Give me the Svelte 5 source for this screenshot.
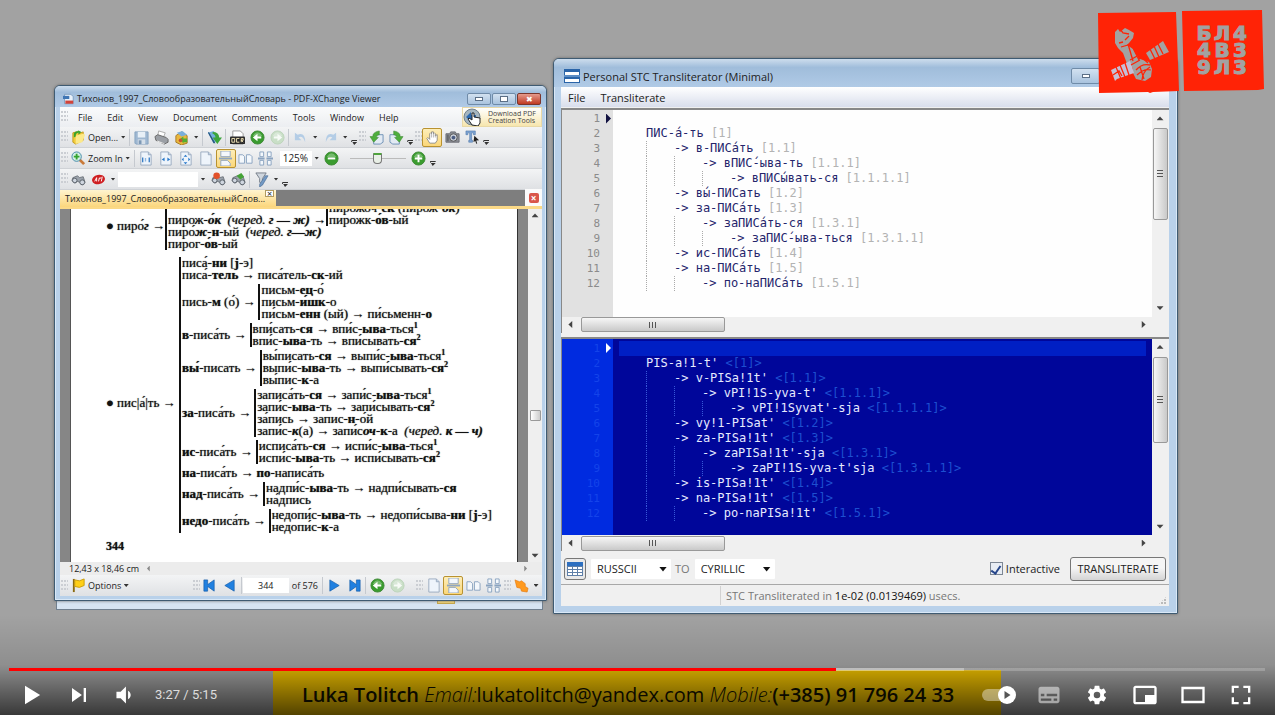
<script>
  const menus = ['File', 'Edit', 'View', 'Document', 'Comments', 'Tools', 'Window', 'Help'];

  const fileBar = ['grip', 'folder', 'Open...', 'drop', 'sep', 'save', 'print', 'mail', 'drop', 'sep', 'scan', 'sep', 'ocr', 'back', 'fwd', 'sep', 'undo', 'drop', 'redo', 'drop', 'more', 'grip', 'rotl', 'rotr', 'more', 'grip', 'hand!', 'camera', 'textsel', 'more'];
  const zoomBar = ['grip', 'zoom', 'Zoom In', 'drop', 'sep', 'actual', 'fitw', 'fitp', 'page', 'cont!', 'facing', 'quad'];

  const groups = [
    { head: '*в*-писа́ть', items: ['впи́сать-*ся* → впи́с-*ыва*-ться^1', 'впи́с-*ыва*-ть → впи́сывать-*ся*^2'] },
    { head: '*вы́*-писать', items: ['вы́писать-*ся* → выпи́с-*ыва*-ться^1', 'выпи́с-*ыва*-ть → выпи́сывать-*ся*^2', 'вы́пис-*к*-а'] },
    { head: '*за*-писа́ть', items: ['записа́ть-*ся* → запи́с-*ыва*-ться^1', 'запи́с-*ыва*-ть → запи́сывать-*ся*^2', 'за́пись → запис-*н*-о́й', 'запи́с-_к_(а) → запи́с_оч_-*к*-а  ~(черед.~ _к — ч)_'] },
    { head: '*ис*-писа́ть', items: ['исписа́ть-*ся* → испи́с-*ыва*-ться^1', 'испи́с-*ыва*-ть → испи́сывать-*ся*^2'] },
    { head: '*на*-писа́ть', plain: '*по*-написа́ть' },
    { head: '*над*-писа́ть', items: ['надпи́с-*ыва*-ть → надпи́сывать-*ся*', 'на́дпись'] },
    { head: '*недо*-писа́ть', items: ['недопи́с-*ыва*-ть → недопи́сыва-*ни* [*j*-э]', 'недопи́с-*к*-а'] }
  ];
  const noun = { head: 'пись-*м* (о́)', items: ['письм-*ец*-о́', 'письм-*и́шк*-о', 'пи́сьм-*енн* (ый) → пи́сьменн-*о*'] };

  const source = [
    [0, '', ''],
    [0, 'ПИС-а́-ть', '[1]'],
    [1, 'в-ПИСа́ть', '[1.1]'],
    [2, 'вПИС́-ыва-ть', '[1.1.1]'],
    [3, 'вПИС́ывать-ся', '[1.1.1.1]'],
    [1, 'вы́-ПИСать', '[1.2]'],
    [1, 'за-ПИСа́ть', '[1.3]'],
    [2, 'заПИСа́ть-ся', '[1.3.1]'],
    [3, 'заПИС́-ыва-ться', '[1.3.1.1]'],
    [1, 'ис-ПИСа́ть', '[1.4]'],
    [1, 'на-ПИСа́ть', '[1.5]'],
    [2, 'по-наПИСа́ть', '[1.5.1]']
  ];
  const result = [
    [0, '', ''],
    [0, "PIS-a!1-t'", '<[1]>'],
    [1, "v-PISa!1t'", '<[1.1]>'],
    [2, "vPI!1S-yva-t'", '<[1.1.1]>'],
    [3, "vPI!1Syvat'-sja", '<[1.1.1.1]>'],
    [1, "vy!1-PISat'", '<[1.2]>'],
    [1, "za-PISa!1t'", '<[1.3]>'],
    [2, "zaPISa!1t'-sja", '<[1.3.1]>'],
    [3, "zaPI!1S-yva-t'sja", '<[1.3.1.1]>'],
    [1, "is-PISa!1t'", '<[1.4]>'],
    [1, "na-PISa!1t'", '<[1.5]>'],
    [2, "po-naPISa!1t'", '<[1.5.1]>']
  ];

  // *bold*, _bold italic_, ~italic~ and ^superscript digit
  function runs(text) {
    const out = [];
    const kinds = { '*': 'b', '_': 'bi', '~': 'i' };
    const re = /([*_~])(.+?)\1|\^(\d)|[^*_~^]+/g;
    for (const m of text.matchAll(re)) {
      if (m[1]) out.push({ k: kinds[m[1]], t: m[2] });
      else if (m[3]) out.push({ k: 'sup', t: m[3] });
      else out.push({ k: '', t: m[0] });
    }
    return out;
  }

  let interactive = $state(true);
  let position = $state(207);
</script>

{#snippet icon(name)}
  <svg class="ico" viewBox="0 0 16 16" aria-hidden="true">
    {#if name === 'folder'}
      <path d="M2 3l4-1 2 2 5-2v9l-8 4-3-2z" fill="#f3cd3c" stroke="#c49a1c" /><path d="M5 6l8-2 2 1-3 8-7 2z" fill="#fce98a" /><path d="M3 8V4q1-3 5-3l-1-1 4 2-3 3V3q-3 0-3 4z" fill="#3ba32b" />
    {:else if name === 'save'}
      <path d="M1 2h14v13H2l-1-1z" fill="#9fb8d2" stroke="#86a3c0" /><path d="M4 2h8v6H4z" fill="#e8f0f7" /><path d="M4 10h8v5H4z" fill="#d5dfe9" /><path d="M5 11h3v4H5z" fill="#7d98b5" />
    {:else if name === 'print'}
      <path d="M5 1l7 2-2 5-6-2z" fill="#fff" stroke="#aaa" /><path d="M1 7l3-2 9 3 2 2v3l-4 2-9-4z" fill="#9b9fa5" stroke="#666" /><path d="M3 11l8 3v1l-7-2z" fill="#e8e8e8" />
    {:else if name === 'mail'}
      <path d="M2 6l6-4 6 4v8l-6 2-6-3z" fill="#e9b73d" stroke="#a87b22" /><path d="M3 3l6-2 5 4-6 2z" fill="#79aeda" /><path d="M7 9l3-2v2h4v4h-4v2z" fill="#54ad32" /><circle cx="7" cy="11" r="2" fill="#c25335" />
    {:else if name === 'scan'}
      <path d="M1 3l6-2 6 9-6 4z" fill="#74b1e0" /><path d="M1 3l6 11 2 0-7-12z" fill="#285781" /><path d="M6 2q7 0 7 6h3l-5 7-5-7h3q0-3-3-4z" fill="#3ca53c" />
    {:else if name === 'ocr'}
      <path d="M3 1h8l3 3v11H3z" fill="#fff" stroke="#999" /><rect y="7" width="16" height="8" rx="1" fill="#292929" /><path d="M2 9h3v4H2zM10 9H7v4h3M12 13V9h2v2h-2l2 2" fill="none" stroke="#f4e8ba" />
    {:else if ['back', 'fwd', 'fwdoff', 'minus', 'plus'].includes(name)}
      <circle cx="8" cy="8" r="7" fill={name.startsWith('fwd') ? '#c9dfc7' : '#3a9c2f'} stroke={name.startsWith('fwd') ? '#bdd3bb' : '#3f8a36'} />
      <path d="M3 6q5-7 10 0-5 3-10 0" fill="#fff" opacity=".3" />
      {#if name === 'back'}<path d="M12 7v2H8v3L3 8l5-4v3z" fill="#fff" />
      {:else if name === 'minus'}<path d="M4 7h8v2H4z" fill="#fff" />
      {:else if name === 'plus'}<path d="M4 7h3V4h2v3h3v2H9v3H7V9H4z" fill="#fff" />
      {:else}<path d="M4 7v2h4v3l5-4-5-4v3z" fill="#f7fbf7" />{/if}
    {:else if name === 'undo'}
      <path d="M2 3v8h7L6 8q4-3 7 5Q13 2 5 5z" fill="#b4cde6" />
    {:else if name === 'redo'}
      <path d="M14 3v8H7l3-3q-4-3-7 5Q3 2 11 5z" fill="#b4cde6" />
    {:else if name === 'rotl' || name === 'rotr'}
      <g transform={name === 'rotr' ? 'translate(16 0) scale(-1 1)' : ''}><path d="M5 5h10v8l-3 2H5z" fill="#e2eaf3" stroke="#6f91b5" /><path d="M1 7h3q0-5 7-6v4Q8 5 8 8h2l-5 5z" fill="#4fae3d" stroke="#2f7d26" stroke-width=".5" /></g>
    {:else if name === 'hand'}
      <path d="M5 14L2 9l1-1 2 2V4l1-1 1 1V2h2v2l1-1 1 1v2l2-1v6l-2 3z" fill="#fff" stroke="#777" stroke-width=".8" /><path d="M7 4v4M9 4v4M11 5v3" stroke="#999" stroke-width=".7" />
    {:else if name === 'camera'}
      <path d="M1 4h4l1-2h5l1 2h3v9H1z" fill="#8b8e95" stroke="#6b6d74" /><circle cx="9" cy="8" r="4" fill="#c8cdd6" stroke="#555" /><circle cx="9" cy="8" r="2" fill="#4a5c82" /><path d="M2 5h2v7H2z" fill="#66686d" />
    {:else if name === 'textsel'}
      <path d="M1 1h10v4H9V3H7v8h1v2H4v-2h1V3H3v2H1z" fill="#7fa5d4" stroke="#4a73a8" stroke-width=".6" /><path d="M10 6l5 5-3 .3 1 3-1 .4-1-3-2 1z" fill="#222" />
    {:else if name === 'zoom'}
      <path d="M9 9l5 5" stroke="#c97a3a" stroke-width="3" /><circle cx="6" cy="6" r="5" fill="#d3efe4" stroke="#4287a8" /><path d="M3 5h2V3h2v2h2v2H7v2H5V7H3z" fill="#34a52e" />
    {:else if ['actual', 'fitw', 'fitp', 'page'].includes(name)}
      <path d="M3 1h8l3 3v11H3z" fill="#eef4fb" stroke="#9aabc0" /><path d="M11 1v3h3" fill="#c3d3e5" stroke="#9aabc0" />
      {#if name === 'actual'}<path d="M5 7v5M12 7v5M8 8v1M8 10v1" stroke="#347bc4" stroke-width="1.4" />
      {:else if name === 'fitw'}<path d="M4 9l3-2v4zM13 9l-3-2v4z" fill="#2878ca" />
      {:else if name === 'fitp'}<path d="M8 4l2 2H6zM8 14l2-2H6zM4 9l2-2v4zM13 9l-2-2v4z" fill="#2878ca" />{/if}
    {:else if name === 'cont'}
      <path d="M3 0h10v6H3zM3 10h7l3 3v3H3z" fill="#f4f7fb" stroke="#93a5bd" /><path d="M1 8h14" stroke="#8ea5c2" stroke-width="2" />
    {:else if name === 'facing'}
      <path d="M1 4h4l2 2v7H1zM9 4h4l2 2v7H9z" fill="#f4f8fc" stroke="#8aa3c0" />
    {:else if name === 'quad'}
      <path d="M2 1h4v5H2zM10 1h4v5h-4zM2 10h4v5H2zM10 10h4v5h-4z" fill="#f4f8fc" stroke="#8aa3c0" /><path d="M0 8h7M9 8h7" stroke="#8aa3c0" stroke-width="2" />
    {:else if name === 'find' || name === 'findr' || name === 'findg'}
      <path d="M2 6l5-2 2 2 4-1 2 6-3 3-3-3-2-1-3 2-3-3z" fill="#9ba2ab" stroke="#5c636b" stroke-width=".8" /><circle cx="4" cy="9" r="2.4" fill="#cfd6df" stroke="#5c636b" /><circle cx="12" cy="11" r="2.6" fill="#cfd6df" stroke="#5c636b" />
      {#if name === 'findr'}<circle cx="6" cy="4" r="3.5" fill="#e2512a" />{:else if name === 'findg'}<path d="M6 4l5-3 3 4-4 3z" fill="#44a336" />{/if}
    {:else if name === 'badge'}
      <ellipse cx="8" cy="8" rx="7" ry="5" fill="#cf1f22" transform="rotate(-12 8 8)" /><path d="M4 10l2-4v4M9 6L8 10M12 5l-1 5M9 7l2-1" stroke="#fff" fill="none" />
    {:else if name === 'funnel'}
      <path d="M2 1h11L9 7v6l-3-2V7z" fill="#cfd6de" stroke="#747d87" /><path d="M15 4L9 14l-3 2v-3l6-9z" fill="#7299c4" stroke="#42648c" stroke-width=".6" />
    {:else if name === 'flag'}
      <path d="M3 1v14" stroke="#8a6a10" stroke-width="2" /><path d="M4 2l5 1 5-2v7l-5 2-5-1z" fill="#ffcf16" stroke="#c99c0a" />
    {:else if name === 'first'}
      <path d="M2 2h4v5l7-5v12L6 9v5H2z" fill="#2080e0" stroke="#145ba8" stroke-width=".7" />
    {:else if name === 'last'}
      <path d="M14 2h-4v5L3 2v12l7-5v5h4z" fill="#2080e0" stroke="#145ba8" stroke-width=".7" />
    {:else if name === 'prev'}
      <path d="M13 2v12L3 8z" fill="#2080e0" stroke="#145ba8" stroke-width=".7" />
    {:else if name === 'next'}
      <path d="M3 2v12l10-6z" fill="#2080e0" stroke="#145ba8" stroke-width=".7" />
    {:else if name === 'launch'}
      <path d="M1 2l5 2 2-1 4 3 0 3 3 2-1 4-6-1-1-3-4-1z" fill="#ff9a1f" stroke="#e07307" stroke-width=".6" />
    {/if}
  </svg>
{/snippet}

{#snippet tool(item)}
  {#if item === 'grip'}<span class="grip"></span>
  {:else if item === 'sep'}<span class="sep"></span>
  {:else if item === 'drop'}<button class="drop" aria-label="More choices"><i></i></button>
  {:else if item === 'more'}<button class="drop more" aria-label="Toolbar options"><i></i></button>
  {:else if /^[A-Z]/.test(item)}<button class="label">{item}</button>
  {:else}<button class="tool" class:on={item.endsWith('!')} aria-label={item.replace('!', '')}>{@render icon(item.replace('!', ''))}</button>{/if}
{/snippet}

{#snippet rich(text)}{#each runs(text) as r}{#if r.k === 'sup'}<sup>{r.t}</sup>{:else}<span class={r.k}>{r.t}</span>{/if}{/each}{/snippet}

{#snippet branch(g)}
  <div class="branch">
    <span class="head">{@render rich(g.head)} →</span>
    {#if g.plain}<span>{@render rich(g.plain)}</span>
    {:else}<div class="bracket">{#each g.items as it}<div>{@render rich(it)}</div>{/each}</div>{/if}
  </div>
{/snippet}

{#snippet editor(lines, dark)}
  <div class="editor" class:dark>
    <div class="code">
      {#each lines as [level, word, tag], n}
        <div class="line">
          <span class="num">{n + 1}</span><span class="mark">{#if n === 0}<i></i>{/if}</span>
          <span class="src" class:current={n === 0}>
            {#each Array(level) as _}<span class="guide"></span>{/each}{#if word}<span>{level ? '-> ' : ''}{word} <em>{tag}</em></span>{/if}
          </span>
        </div>
      {/each}
    </div>
    <div class="vbar"><i class="up"></i><span class="thumb"></span><i class="down"></i></div>
    <div class="hbar"><i class="left"></i><span class="thumb"></span><i class="right"></i></div>
    <div class="corner"></div>
  </div>
{/snippet}

<main class="stage">
  <div class="shade-window"><span></span></div>

  <section class="window pdf" aria-label="PDF-XChange Viewer">
    <header class="title">
      <svg class="app" viewBox="0 0 14 14" aria-hidden="true"><path d="M2 1h8l3 3v9H2z" fill="#e9f1fa" stroke="#6f93b9" /><path d="M0 3h8v4H0z" fill="#3f76b4" /><path d="M3 9h10v4H3z" fill="#d2433a" /></svg>
      <h1>Тихонов_1997_СловообразовательныйСловарь - PDF-XChange Viewer</h1>
      <div class="winbtns">
        <button aria-label="Minimize"><i class="min"></i></button><button aria-label="Maximize"><i class="max"></i></button><button class="close" aria-label="Close">✖</button>
      </div>
    </header>
    <div class="body">
      <nav class="menubar">
        <span class="grip"></span>
        {#each menus as m}<button>{m}</button>{/each}
        <a class="promo" href="#tools">
          <svg viewBox="0 0 20 18" aria-hidden="true"><circle cx="9" cy="9" r="8" fill="#a5b5bf" stroke="#70808c" /><path d="M3 9l5-5v3h5v4H8v3z" fill="#2c6ab0" /><path d="M9 17l-4-6 1-1 3 2V5h2v4l6 1v5l-2 3z" fill="#fff" stroke="#222" /></svg>
          <span>Download PDF<br />Creation Tools</span>
        </a>
      </nav>
      <div class="bar">{#each fileBar as t}{@render tool(t)}{/each}</div>
      <div class="bar">
        {#each zoomBar as t}{@render tool(t)}{/each}
        <input class="pct" aria-label="Zoom level" value="125%" />
        {@render tool('drop')}{@render tool('minus')}
        <input class="zoomslide" type="range" aria-label="Zoom" value="50" />
        {@render tool('plus')}{@render tool('more')}
      </div>
      <div class="bar">
        {#each ['grip', 'find', 'badge', 'drop'] as t}{@render tool(t)}{/each}
        <input class="search" aria-label="Search" />
        {#each ['drop', 'findr', 'findg', 'sep', 'funnel', 'drop', 'more'] as t}{@render tool(t)}{/each}
      </div>
      <div class="tabs">
        <div class="tab"><span>Тихонов_1997_СловообразовательныйСлов...</span><button aria-label="Close tab">×</button></div>
        <button class="closedoc" aria-label="Close document"><b>×</b></button>
      </div>
      <div class="view">
        <article class="sheet">
          <div class="entry first">
            <span class="word">● пиро́<span class="bi">г</span> →</span>
            <div class="bracket">
              <div class="inner">
                <div>{@render rich('пирож-_о́к_  ~(черед.~ _г — ж)_ →')}</div>
                <div class="bracket"><div>{@render rich('пирожо́ч-*ек* (пирож-_о́к_)')}</div><div>{@render rich('пирожк-*о́в*-ый')}</div></div>
              </div>
              <div>{@render rich('пиро́_ж_-*н*-ый  ~(черед.~ _г—ж)_')}</div>
              <div>{@render rich('пирог-*о́в*-ый')}</div>
            </div>
          </div>
          <div class="entry second">
            <span class="word">● пис|а́|ть →</span>
            <div class="bracket stack">
              <div class="lines"><div>{@render rich('писа́-*ни* [*j*-э]')}</div><div>{@render rich('писа́-*тель* → писа́тель-*ск*-ий')}</div></div>
              {@render branch(noun)}
              {#each groups as g}{@render branch(g)}{/each}
            </div>
          </div>
          <div class="folio">344</div>
        </article>
        <div class="pagebar"><i class="up"></i><span></span><i class="down"></i></div>
      </div>
      <div class="size"><span>12,43 x 18,46 cm</span><i class="left"></i><i class="right"></i></div>
      <div class="bar foot">
        {#each ['grip', 'flag', 'Options', 'drop'] as t}{@render tool(t)}{/each}
        <span class="grow"></span>
        {#each ['grip', 'first', 'prev', 'sep'] as t}{@render tool(t)}{/each}
        <input class="pageno" aria-label="Page" value="344" />
        <span class="of">of 576</span>
        {#each ['sep', 'next', 'last', 'sep', 'back', 'fwdoff'] as t}{@render tool(t)}{/each}
        <span class="gap"></span>
        {#each ['grip', 'page', 'cont!', 'facing', 'quad', 'grip', 'launch', 'drop'] as t}{@render tool(t)}{/each}
      </div>
    </div>
  </section>

  <section class="window stc" aria-label="Personal STC Transliterator">
    <header class="title">
      <svg class="app" viewBox="0 0 16 16" aria-hidden="true"><path d="M0 1h16v14H0z" fill="#2a64a8" /><path d="M1 4h14v3H1zM1 11h14v3H1z" fill="#fff" /><path d="M0 8h16" stroke="#8db5df" /></svg>
      <h1>Personal STC Transliterator (Minimal)</h1>
      <div class="winbtns"><button aria-label="Minimize"><i class="min"></i></button></div>
    </header>
    <div class="body">
      <nav class="menubar"><button>File</button><button>Transliterate</button></nav>
      {@render editor(source, false)}
      {@render editor(result, true)}
      <div class="controls">
        <button class="grid" aria-label="Table"><svg viewBox="0 0 16 14" aria-hidden="true"><path d="M0 0h16v14H0z" fill="#5e7fa8" /><path d="M0 0h16v4H0z" fill="#2d6fc0" /><path d="M1 5h4v2H1zM6 5h4v2H6zM11 5h4v2h-4zM1 8h4v2H1zM6 8h4v2H6zM11 8h4v2h-4zM1 11h4v2H1zM6 11h4v2H6zM11 11h4v2h-4z" fill="#fff" /></svg></button>
        <span class="pick"><select aria-label="Source alphabet"><option>RUSSCII</option></select></span>
        <span class="to">TO</span>
        <span class="pick"><select aria-label="Target alphabet"><option>CYRILLIC</option></select></span>
        <label><input type="checkbox" bind:checked={interactive} />Interactive</label>
        <button class="go">TRANSLITERATE</button>
      </div>
      <footer><span class="cell"></span><span>STC Transliterated in <b>1e-02 (0.0139469)</b> usecs.</span><span class="sizer"></span></footer>
    </div>
  </section>

  <div class="logo">
    <svg viewBox="0 0 168 84" aria-hidden="true">
      <path d="M1 3l78-1 3 79-26 1-3 1-2-1-49 1z" fill="#ff2306" />
      <path d="M85 1l80-1 1 40 1 39-6 1-74 1z" fill="#ff2306" />
      <g fill="#a2a2a2">
        <path d="M18 22l3-3 2 3 5-4 4 2 5 3-1 5-4 5-2 2 6 4 6 10 2 5-7 3-5 2-3-8-3-8-5-5-3-5z" />
        <path d="M49 43l17-12 6 11-19 8z" />
        <path d="M35 53l8-4 9 3 3 7-1 8-6 4-9-2-3-6z" />
      </g>
      <path d="M14 60l19-9 4 12-17 6-2 2z" fill="#c6bfd6" />
      <path d="M23 19l3 4 6 1M22 33l4-1M24 37l7-2M32 26l-4 4M31 34l5 17M36 38l6 12M33 50l9-5 9 8M34 55l9-5M39 60q6-7 14-5M40 65q7-7 14-5M45 70q1-9 8-13M43 57l4 12M53 39l5 10M57 36l5 11M61 34l5 10M19 57l5 12M23 55l5 12M28 53l4 12M16 65l6-4 3 5" fill="none" stroke="#ff2306" stroke-width="1.3" />
    </svg>
    <div class="letters">{#each 'БЛ44В39Л3'.split('') as c}<span>{c}</span>{/each}</div>
  </div>

  <div class="banner"></div>
  <div class="fade"></div>
  <div class="contact"><b>Luka Tolitch</b> <i>Email:</i><span>lukatolitch@yandex.com</span> <i>Mobile:</i><b>(+385) 91 796 24 33</b></div>

  <div class="player">
    <input class="seek" type="range" aria-label="Seek" min="0" max="315" bind:value={position} style="--at: {(position / 315) * 100 + 0.1}%" />
    <div class="buttons">
      <button aria-label="Play"><svg viewBox="0 0 36 36"><path d="M12 26l13-8-13-8z" /></svg></button>
      <button aria-label="Next"><svg viewBox="0 0 36 36"><path d="M12 24l8.500-6L12 12zM22 12v12h2V12z" /></svg></button>
      <button class="vol" aria-label="Mute"><svg viewBox="0 0 36 36"><path d="M8 21h4l5 5V10l-5 5H8zM19 14v8c1.480-.68 2.500-2.230 2.500-4s-1.020-3.260-2.500-4z" /></svg></button>
      <span class="time">3:27 / 5:15</span>
      <button class="auto" aria-label="Autoplay"><svg viewBox="0 0 36 22"><rect x="1" y="5" width="30" height="12" rx="6" fill="#fff" opacity=".4" /><circle cx="26" cy="11" r="9" /><path d="M23.500 7v8l6-4z" fill="#555" /></svg></button>
      <button class="dim" aria-label="Subtitles"><svg viewBox="0 0 36 36"><path fill-rule="evenodd" d="M11 11c-1.100 0-2 .9-2 2v10c0 1.100.9 2 2 2h14c1.100 0 2-.9 2-2V13c0-1.100-.9-2-2-2zM11 17h3v2h-3zM20 23h-9v-2h9zM25 23h-3v-2h3zM25 19h-9v-2h9z" /></svg></button>
      <button aria-label="Settings"><svg viewBox="0 0 36 36"><path fill-rule="evenodd" d="m23.940 18.780c.03-.25.05-.51.05-.78s-.02-.52-.05-.78l1.680-1.320c.15-.12.19-.33.09-.51l-1.600-2.760c-.09-.17-.31-.24-.48-.17l-1.990.8c-.41-.32-.86-.58-1.350-.78l-.3-2.120c-.02-.19-.19-.33-.39-.33h-3.200c-.2 0-.36.14-.39.33l-.3 2.120c-.48.2-.93.47-1.350.78l-1.990-.8c-.18-.07-.39 0-.48.17l-1.600 2.760c-.1.17-.05.39.09.51l1.680 1.320c-.03.25-.05.52-.05.78s.02.52.05.78l-1.680 1.320c-.15.12-.19.33-.09.51l1.600 2.760c.09.17.31.24.48.17l1.990-.8c.41.32.86.58 1.350.78l.3 2.120c.02.19.19.33.39.33h3.200c.2 0 .36-.14.39-.33l.3-2.120c.48-.2.93-.47 1.350-.78l1.990.8c.18.07.39 0 .48-.17l1.600-2.760c.09-.17.05-.39-.09-.51zM18 20.800a2.800 2.800 0 1 1 0-5.600a2.800 2.800 0 1 1 0 5.600z" /></svg></button>
      <button aria-label="Miniplayer"><svg viewBox="0 0 36 36"><path fill-rule="evenodd" d="M26 18h-8v6h8zM28 24V12c0-1.100-.9-2-2-2H10c-1.100 0-2 .9-2 2v12c0 1.100.9 2 2 2h16c1.100 0 2-.9 2-2zM26 24H10V12h16z" /></svg></button>
      <button aria-label="Theater mode"><svg viewBox="0 0 36 36"><path fill-rule="evenodd" d="M28 11v14H8V11zM10 13h16v10H10z" /></svg></button>
      <button aria-label="Full screen"><svg viewBox="0 0 36 36"><path d="M10 16h2v-4h4v-2h-6zM20 10v2h4v4h2v-6zM24 24h-4v2h6v-6h-2zM12 20h-2v6h6v-2h-4z" /></svg></button>
    </div>
  </div>
</main>

<style>
  :global(body) { background: #a2a2a2; }
  .stage { position: relative; height: 100vh; min-height: 715px; overflow: hidden; background: #a2a2a2; font-family: "Open Sans", "Noto Sans", sans-serif; font-size: 9px; color: #222; }
  .stage * { box-sizing: border-box; }
  button, input, select { font: inherit; color: inherit; margin: 0; padding: 0; border: 0; background: none; outline: 0; }
  button { display: flex; align-items: center; justify-content: center; white-space: nowrap; }
  h1 { margin: 0; font: inherit; white-space: nowrap; }
  i.up, i.down, i.left, i.right { width: 7px; height: 7px; background: #444; flex: none; }
  i.up { clip-path: polygon(0 75%, 50% 20%, 100% 75%); }
  i.down { clip-path: polygon(0 25%, 50% 80%, 100% 25%); }
  i.left { clip-path: polygon(75% 0, 20% 50%, 75% 100%); }
  i.right { clip-path: polygon(25% 0, 80% 50%, 25% 100%); }

  .window { position: absolute; display: flex; flex-direction: column; border: 1px solid #3f5b72; border-radius: 6px 6px 1px 1px; background: #b9d1ea; box-shadow: inset 0 0 0 1px #d9e8f7, 0 0 3px #666; }
  .body { flex: 1; min-height: 0; display: flex; flex-direction: column; background: #f0f0f0; overflow: hidden; }
  .title { display: flex; align-items: center; border-radius: 5px 5px 0 0; background: linear-gradient(#cddded, #a0bddb 30%, #b0cae6); flex: none; }
  .title h1 { flex: 1; }
  .winbtns { display: flex; align-self: flex-start; }
  .winbtns button { width: 24px; height: 12px; margin-right: 1px; border: 1px solid #6f8ba8; border-radius: 2px; background: linear-gradient(#d2e1f0, #a9c3de); }
  .winbtns .close { background: linear-gradient(#e59a8c, #c03a22); border-color: #7a352b; color: #fff; font-size: 8px; line-height: 10px; }
  .min { width: 8px; height: 4px; border: 1px solid #5b6f86; background: #fff; }
  .max { width: 8px; height: 6px; border: 1px solid #5b6f86; background: #fff; }

  .shade-window { position: absolute; inset: 590px 732px 105px 56px; border: 1px solid #707f8e; background: #d6e4f2; display: flex; align-items: flex-end; justify-content: flex-end; padding: 0 87px 5px 0; }
  .shade-window span { width: 18px; height: 4px; background: #f5d778; border: 1px solid #c9a94c; }

  .pdf { inset: 85px 728px 114px 54px; padding: 0 4px 4px 5px; }
  .pdf .title { height: 21px; margin: 0 -4px 0 -5px; padding: 4px 4px 0 8px; }
  .pdf .title .app { width: 11px; height: 12px; margin-right: 3px; }
  .pdf .winbtns { margin-top: 3px; }
  .pdf .menubar { display: flex; align-items: stretch; height: 20px; background: linear-gradient(#fafbfc, #eceef1); }
  .pdf .menubar button { margin-left: 10px; margin-right: 5px; }
  .promo { margin-left: auto; width: 80px; display: flex; align-items: center; gap: 5px; color: #444; text-decoration: none; font-size: 7px; line-height: 7px; background: linear-gradient(#fff, #f7e6ae); border: 1px solid #e9d9a7; white-space: nowrap; }
  .promo svg { width: 20px; height: 18px; flex: none; }
  .bar { display: flex; align-items: center; height: 21px; flex: none; background: linear-gradient(#f3f4f5, #dfe1e4); border-bottom: 1px solid #cfd2d6; }
  .grip { width: 8px; height: 12px; flex: none; align-self: center; background: radial-gradient(circle at 1px 1px, #cbced3 1px, transparent 1px) 1px 0 / 3px 4px; }
  .sep { width: 1px; height: 17px; margin: 0 1px; background: #c5c9cf; flex: none; }
  .tool { width: 20px; height: 19px; flex: none; }
  .tool.on { border: 1px solid #b99230; border-radius: 2px; background: linear-gradient(#fdeeb9, #fbd779); }
  .ico { width: 15px; height: 15px; }
  .drop { width: 10px; height: 16px; flex: none; }
  .drop i { width: 5px; height: 3px; background: #333; clip-path: polygon(0 0, 100% 0, 50% 100%); }
  .drop.more { width: 8px; align-items: flex-end; }
  .drop.more i { width: 6px; height: 5px; clip-path: polygon(0 0, 100% 0, 100% 20%, 0 20%, 0 40%, 100% 40%, 50% 100%); }
  .pct { width: 32px; height: 15px; margin-left: 4px; background: #fff; padding-left: 3px; font-size: 10px; }
  .search { width: 80px; height: 15px; background: #fff; }
  .zoomslide { appearance: none; width: 56px; height: 14px; margin: 0 3px 0 8px; background: linear-gradient(#bbb, #bbb) center / 100% 1px no-repeat; }
  .zoomslide::-webkit-slider-thumb { appearance: none; width: 9px; height: 11px; border: 1px solid #777; border-top: 2px solid #4fa33c; border-radius: 1px 1px 4px 4px; background: #e8efe6; }
  .tabs { display: flex; align-items: flex-end; height: 19px; flex: none; background: #7e7e7e; border-bottom: 3px solid #fbd987; }
  .tab { display: flex; align-items: flex-start; justify-content: space-between; width: 216px; height: 17px; margin-bottom: -1px; padding-left: 5px; background: linear-gradient(#fff4cf, #fbd67c); }
  .tab span { line-height: 17px; white-space: nowrap; }
  .tab button { width: 9px; height: 7px; margin-right: 3px; border: 1px solid #b09a60; background: #fff; line-height: 5px; flex: none; }
  .closedoc { width: 17px; height: 17px; margin-left: auto; background: #fbfbfb; }
  .closedoc b { width: 10px; height: 10px; border-radius: 2px; background: #d9564a; color: #fff; font-size: 10px; line-height: 10px; }
  .view { flex: 1; min-height: 0; display: flex; padding-left: 10px; background: #868686; }
  .sheet { flex: 1; min-width: 0; display: flex; flex-direction: column; overflow: hidden; background: #fff; color: #111; padding: 0 0 0 35px; font: 13px/12px "Liberation Serif", serif; text-shadow: 0 0 1px #444; white-space: pre; border-right: 1px solid #333; border-left: 1px solid #555; margin-right: 10px; }
  .entry { display: flex; align-items: flex-start; }
  .entry .word { flex: none; }
  .first { margin-top: -7px; }
  .first .word { width: 59px; padding-top: 18px; }
  .second { margin-top: 7px; }
  .second .word { width: 73px; padding-top: 140px; }
  .bracket { display: flex; flex-direction: column; border-left: 2px solid #111; padding-left: 1px; }
  .inner { display: flex; align-items: flex-end; }
  .stack { gap: 3px; }
  .branch { display: flex; align-items: center; }
  .head { margin-right: 3px; }
  .b { font-weight: bold; }
  .i { font-style: italic; }
  .bi { font-weight: bold; font-style: italic; }
  sup { font-size: 8px; line-height: 1px; font-weight: bold; }
  .folio { margin-top: 7px; font-size: 12px; font-weight: bold; }
  .pagebar { width: 14px; flex: none; background: #efefef; display: flex; flex-direction: column; align-items: center; padding: 3px 0; }
  .pagebar span { width: 11px; height: 11px; margin: 191px 0 auto; border: 1px solid #999; background: linear-gradient(90deg, #fff, #ccc); border-radius: 1px; }
  .size { display: flex; align-items: center; height: 13px; flex: none; background: #ececec; padding-right: 14px; }
  .size span { width: 86px; padding-left: 9px; white-space: nowrap; }
  .size i.left, .size i.right { width: 5px; height: 6px; background: #888; }
  .size i.right { margin-left: auto; }
  .foot { border: 0; padding-right: 1px; }
  .grow { flex: 1; }
  .gap { width: 8px; }
  .pageno { width: 46px; height: 15px; background: #fff; text-align: center; }
  .of { padding: 0 3px; white-space: nowrap; }

  .stc { inset: 58px 97px 101px 553px; padding: 0 8px 7px 7px; font-size: 11px; }
  .stc .title { height: 28px; margin: 0 -8px 0 -7px; padding: 6px 8px 0 10px; }
  .stc .title .app { width: 16px; height: 16px; margin-right: 3px; }
  .stc .winbtns { margin: 3px 68px 0 0; }
  .stc .winbtns button { width: 29px; height: 16px; }
  .stc .menubar { display: flex; height: 20px; flex: none; padding-left: 7px; gap: 15px; background: linear-gradient(#fff, #d9deec); }
  .editor { flex: 1 1 224px; min-height: 0; display: grid; grid-template: 1fr 16px / 1fr 17px; border-top: 2px solid #888; border-left: 1px solid #888; margin: 1px 0 3px; }
  .editor.dark { flex-basis: 214px; margin-bottom: 2px; }
  .code { overflow: hidden; padding-top: 1px; background: linear-gradient(90deg, #e1e1e1 51px, #fefefe 51px); font: 12px/15px "DejaVu Sans Mono", monospace; color: #25256b; white-space: nowrap; }
  .line { display: flex; height: 15px; }
  .num { width: 38px; text-align: right; color: #8b8b8b; font-size: 11px; }
  .mark { width: 13px; display: flex; align-items: center; justify-content: flex-end; padding-right: 2px; }
  .mark i { width: 5px; height: 10px; background: #111140; clip-path: polygon(0 0, 100% 50%, 0 100%); }
  .src { flex: 1; display: flex; margin: 0 6px; padding-left: 27px; white-space: pre; }
  .guide { width: 28px; border-left: 1px dotted #aaa; }
  em { font-style: normal; color: #b3b3b3; }
  .dark .code { padding-top: 2px; background: linear-gradient(90deg, #002be0 51px, #00069a 51px); color: #e6eaff; }
  .dark .num { color: #1443ea; }
  .dark .mark i { background: #fff; }
  .dark .current { background: #001fc4; }
  .dark .guide { border-color: #3858d8; }
  .dark em { color: #1d4fd0; }
  .vbar, .hbar { display: flex; align-items: center; background: #f0f0f0; }
  .vbar { flex-direction: column; padding: 5px 2px 5px 1px; }
  .vbar .thumb { width: 15px; height: 92px; margin: 6px 0 auto; border: 1px solid #999; border-radius: 2px; background: repeating-linear-gradient(#555 0 1px, transparent 1px 3px) center / 6px 8px no-repeat, linear-gradient(90deg, #f6f6f6, #c9c9c9); }
  .dark .vbar .thumb { height: 86px; }
  .hbar { padding: 0 5px; }
  .hbar .thumb { width: 144px; height: 15px; margin: 0 auto 0 7px; border: 1px solid #999; border-radius: 2px; background: repeating-linear-gradient(90deg, #555 0 1px, transparent 1px 3px) center / 8px 6px no-repeat, linear-gradient(#f6f6f6, #c9c9c9); }
  .controls { display: flex; align-items: center; height: 32px; flex: none; padding: 0 3px; border-bottom: 1px solid #a8a8a8; }
  .grid { width: 22px; height: 22px; border: 1px solid #777; border-radius: 3px; background: #e9e9e9; }
  .grid svg { width: 16px; height: 14px; }
  .pick { position: relative; display: flex; margin-left: 5px; }
  .pick::after { content: ""; position: absolute; right: 4px; top: 8px; width: 8px; height: 5px; background: #111; clip-path: polygon(0 0, 100% 0, 50% 100%); pointer-events: none; }
  select { appearance: none; width: 80px; height: 20px; padding: 0 6px; background: #fff; border-radius: 1px; }
  .to { color: #777; margin-left: 4px; }
  label { display: flex; align-items: center; gap: 3px; margin: 0 10px 0 auto; }
  label input { appearance: none; width: 13px; height: 13px; border: 1px solid #7d8794; background: #e8edf4; display: grid; place-items: center; }
  label input:checked::after { content: ""; width: 4px; height: 8px; border: solid #26468a; border-width: 0 2px 2px 0; transform: rotate(35deg); }
  .go { width: 96px; height: 24px; border: 1px solid #777; border-radius: 3px; background: linear-gradient(#f5f5f5 45%, #d4d4d4); }
  footer { display: flex; align-items: center; height: 21px; flex: none; color: #777; }
  footer b { font-weight: normal; color: #111; }
  .cell { width: 160px; height: 19px; margin-right: 5px; border-right: 1px solid #d2d2d2; }
  .sizer { width: 9px; height: 9px; margin: auto 2px 1px auto; background: radial-gradient(circle at 1px 1px, #bbb 1px, transparent 1px) 0 0 / 3px 3px; clip-path: polygon(100% 0, 100% 100%, 0 100%); }

  .logo { position: absolute; top: 10px; right: 10px; width: 168px; height: 84px; }
  .logo svg { display: block; width: 168px; height: 84px; }
  .letters { position: absolute; top: 15px; left: 98px; display: grid; grid-template-columns: repeat(3, 18px); grid-auto-rows: 17px; justify-items: center; color: #a2a2a2; -webkit-text-stroke: 1px #a2a2a2; font: bold 20px/17px "DejaVu Sans", sans-serif; }

  .banner { position: absolute; left: 273px; right: 274px; bottom: 0; height: 45px; background: #eebf00; }
  .fade { position: absolute; inset: auto 0 0; height: 100px; background: linear-gradient(transparent, rgba(0, 0, 0, 0.12) 50%, rgba(0, 0, 0, 0.65)); }
  .contact { position: absolute; left: 273px; right: 274px; bottom: 7px; padding-left: 29px; font-size: 20px; line-height: 26px; color: #0b0a00; white-space: nowrap; }
  .contact b { font-weight: 600; }
  .contact i { font-weight: 300; }
  .player { position: absolute; inset: auto 0 0; display: flex; flex-direction: column; padding: 0 10px 0 9px; }
  .seek { appearance: none; height: 3px; width: 100%; background: linear-gradient(90deg, #f00 var(--at), rgba(255, 255, 255, 0.45) var(--at) 76%, rgba(255, 255, 255, 0.2) 76%); }
  .seek::-webkit-slider-thumb { appearance: none; width: 0; height: 0; }
  .buttons { display: flex; align-items: center; height: 40px; margin-top: 4px; color: #ddd; }
  .buttons button { width: 48px; height: 40px; flex: none; }
  .buttons button:first-child { width: 46px; }
  .buttons svg { width: 42px; height: 42px; flex: none; fill: #fff; }
  .buttons .vol svg { width: 38px; height: 38px; }
  .buttons .dim { opacity: 0.5; }
  .time { padding-left: 4px; font: 13px/20px Roboto, sans-serif; }
  .buttons .auto { margin-left: auto; margin-right: 2px; }
  .buttons .auto svg { width: 36px; height: 22px; }
</style>
